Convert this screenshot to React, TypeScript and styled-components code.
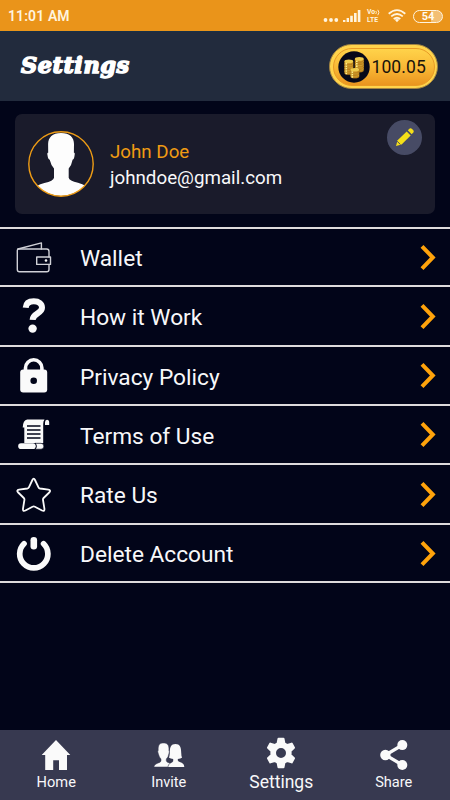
import React from "react";
import styled, { createGlobalStyle } from "styled-components";

const GlobalStyle = createGlobalStyle`
  * { box-sizing: border-box; }
  html, body { margin: 0; padding: 0; background: #020519; }
  body { font-family: Roboto, sans-serif; color: #f8f8fa; overflow: hidden; }
  svg { display: block; flex: none; }
`;

const Screen = styled.div`
  width: 450px;
  height: 800px;
  display: flex;
  flex-direction: column;
  background: #020519;
`;

const StatusBar = styled.div`
  height: 31px;
  flex: none;
  display: flex;
  align-items: center;
  justify-content: space-between;
  padding: 1px 7px 0 8px;
  background: #ea941a;
`;

const Clock = styled.span`
  font-size: 14px;
  font-weight: 600;
  line-height: 20px;
  letter-spacing: 0.1px;
  color: #fff4df;
`;

const StatusIcons = styled.div`
  display: flex;
  align-items: center;
`;

const NetworkLabel = styled.div`
  width: 17px;
  margin: 0 4px 0 6px;
  display: grid;
  grid-template-rows: 8px 8px;
  font-size: 7.5px;
  font-weight: 700;
  line-height: 8px;
  color: #fff4df;
  white-space: nowrap;
`;

const NetworkLine = styled.div`
  display: flex;
  align-items: center;
  height: 8px;
  font-size: 6.8px;
`;

const Battery = styled.span`
  width: 30px;
  height: 13px;
  margin-left: 7px;
  border: 1.5px solid #fff4df;
  border-radius: 7px;
  background: linear-gradient(90deg, #ea941a 25%, #ea941a 60%, #f3bf73 60%);
  color: #fffaf0;
  font-size: 11px;
  font-weight: 700;
  line-height: 11px;
  text-align: center;
`;

const Header = styled.header`
  height: 70px;
  flex: none;
  display: flex;
  align-items: center;
  justify-content: space-between;
  padding: 0 12px 0 21px;
  background: #222b3d;
  border-top: 1px solid #183047;
`;

const Title = styled.h1`
  margin: -3px 0 0;
  font-family: "DejaVu Serif", serif;
  font-size: 22.5px;
  font-weight: 700;
  font-style: italic;
  line-height: 30px;
  letter-spacing: 0.5px;
  color: #fff;
  -webkit-text-stroke: 1.5px #fff;
`;

const Balance = styled.div`
  width: 109px;
  height: 45px;
  padding: 2.5px;
  border-radius: 23px;
  background: #ffd34b;
  border: 1px solid #a18342;
`;

const BalanceInner = styled.div`
  height: 100%;
  display: flex;
  align-items: center;
  gap: 2px;
  padding-left: 4px;
  border: 1px solid #e99a25;
  border-radius: 20px;
  background: linear-gradient(#ffd34a, #f9b936 50%, #ea951f);
  color: #18130c;
  font-size: 17.5px;
  letter-spacing: 0.1px;
`;

const ProfileCard = styled.section`
  height: 100px;
  flex: none;
  display: flex;
  align-items: center;
  margin: 13px 15px 13px;
  padding: 0 13px 0 13px;
  border-radius: 7px;
  background: #1a1b2b;
`;

const Identity = styled.div`
  flex: 1;
  margin-left: 16px;
  padding-top: 2px;
  font-size: 18.75px;
  line-height: 26px;
`;

const Name = styled.div`
  color: #f09b13;
`;

const EditButton = styled.button`
  width: 35px;
  height: 35px;
  align-self: flex-start;
  margin-top: 6px;
  display: grid;
  place-items: center;
  padding: 0;
  border: 0;
  border-radius: 50%;
  background: #474b65;
`;

const Menu = styled.nav`
  flex: none;
  display: grid;
  grid-template-rows: 58px 60px 59px 59px 60px 58px;
  border-bottom: 2px solid #dedbdc;
`;

const MenuRow = styled.div`
  display: flex;
  align-items: center;
  padding: 1px 13px 0 14px;
  border-top: 2px solid #dedbdc;
`;

const MenuLabel = styled.span`
  flex: 1;
  margin-left: 26px;
  padding-top: 3px;
  font-size: 22.7px;
  line-height: 28px;
`;

const BottomNav = styled.nav`
  height: 70px;
  flex: none;
  margin-top: auto;
  display: grid;
  grid-template-columns: repeat(4, 1fr);
  background: #373950;
`;

const Tab = styled.div<{ $active?: boolean }>`
  display: flex;
  flex-direction: column;
  align-items: center;
  padding-top: ${(p) => (p.$active ? 6 : 9)}px;
  font-size: ${(p) => (p.$active ? 17.5 : 14.6)}px;
  line-height: 20px;
`;

const TabLabel = styled.span<{ $active?: boolean }>`
  margin-top: ${(p) => (p.$active ? 2 : 1)}px;
`;

const ink = "#fafafa";

const MenuIcon = ({ children }: { children: React.ReactNode }) => (
  <svg width="40" height="40" viewBox="0 0 40 40" fill="none" stroke={ink} strokeLinecap="round" strokeLinejoin="round">
    {children}
  </svg>
);

const WalletIcon = () => (
  <MenuIcon>
    <g stroke="#d0d1d7" strokeWidth="1.4">
      <path d="M35 19V13.5Q35 11 32.7 11H4.5Q3.3 11 3.3 12.5V31.5Q3.3 33.8 5.5 33.8H32.7Q35 33.8 35 31.5V26.5" />
      <path d="M4 11L27.4 4.9V11" />
      <path d="M22.7 19H36.5V26.4H22.7Z" />
    </g>
    <circle cx="32" cy="22.5" r="1.3" fill={ink} stroke="none" />
  </MenuIcon>
);

const QuestionIcon = () => (
  <MenuIcon>
    <path d="M11.7 10.8C12 6.2 15.2 4.3 19.8 4.3C25 4.3 28 6.9 28 10.8C28 16.7 18.9 16.1 18.6 22.9" strokeWidth="6" strokeLinecap="butt" />
    <circle cx="18.6" cy="31.6" r="4.2" fill={ink} stroke="none" />
  </MenuIcon>
);

const LockIcon = () => (
  <MenuIcon>
    <path d="M11.5 15V12A8.2 8.2 0 0 1 27.9 12V15" strokeWidth="3.6" />
    <rect x="6.2" y="13.6" width="27" height="22.8" rx="3" fill={ink} stroke="none" />
    <circle cx="19.7" cy="24.7" r="3.3" fill="#020519" stroke="none" />
  </MenuIcon>
);

const ScrollIcon = () => (
  <MenuIcon>
    <path d="M13.2 4.6H30.5Q29.2 6.2 29.2 9V28H10.3V12.4H8.7Q9 5.4 13.2 4.6Z" fill={ink} stroke="none" />
    <path d="M31 10V7.2Q31 4.7 33 4.7Q35.2 4.7 35.2 7.5V10Z" fill={ink} stroke="none" />
    <path d="M13 11H26.5M13 15H26.5M13 19H26.5M13 23H26.5" stroke="#020519" strokeWidth="1.4" strokeLinecap="butt" />
    <rect x="4.2" y="28.3" width="17.6" height="5.8" rx="2.8" fill={ink} stroke="none" />
    <path d="M21.5 28.3H27Q29.8 28.3 29.8 31.2Q29.8 34.2 27 34.2H21.5Q23.7 31.2 21.5 28.3Z" fill={ink} stroke="#020519" strokeWidth="0.6" />
  </MenuIcon>
);

const StarIcon = () => (
  <MenuIcon>
    <path
      d="M18.4 5Q19.7 2.3 21 5L24.5 12.3Q25 13.3 26.1 13.5L34.3 14.7Q37.4 15.3 35.2 17.5L29.6 23Q28.8 23.8 29 25L30.4 33.6Q30.8 36.8 28 35.5L20.9 31.7Q19.7 31.1 18.5 31.7L11.4 35.5Q8.6 36.8 9 33.6L10.4 25Q10.6 23.8 9.8 23L4.2 17.5Q2 15.3 5.1 14.7L13.3 13.5Q14.4 13.3 14.9 12.3Z"
      strokeWidth="1.8"
    />
  </MenuIcon>
);

const PowerIcon = () => (
  <MenuIcon>
    <path d="M10 9.7A14.1 14.1 0 1 0 29.6 9.7" strokeWidth="5.7" />
    <path d="M19.8 6.3V12.3" strokeWidth="6.6" />
  </MenuIcon>
);

const ChevronIcon = () => (
  <svg width="17" height="28" viewBox="0 0 17 28" fill="none" stroke="#ffa30b" strokeWidth="4">
    <path d="M2 2.3L12.8 13.5L2 24.7" />
  </svg>
);

const CoinStack = ({ x, y, coins }: { x: number; y: number; coins: number }) => (
  <g>
    {Array.from({ length: coins }, (_, i) => (
      <g key={i}>
        <path
          d={`M${x - 4.4} ${y - i * 2.4}v2a4.4 1.8 0 0 0 8.8 0v-2z`}
          fill="#c78b20"
          stroke="#81540c"
          strokeWidth="0.3"
        />
        <path d={`M${x - 2.5} ${y + 1.6 - i * 2.4}v1.6`} stroke="#fff08d" strokeWidth="1.6" />
        <ellipse cx={x} cy={y - i * 2.4} rx="4.4" ry="1.8" fill="#efcc4c" />
      </g>
    ))}
  </g>
);

const CoinsIcon = () => (
  <svg width="32" height="32" viewBox="0 0 32 32">
    <circle cx="16" cy="16" r="15.7" fill="#070919" />
    <CoinStack x={21.3} y={17.5} coins={5} />
    <CoinStack x={10.8} y={20} coins={5} />
    <CoinStack x={16.8} y={23.5} coins={3} />
  </svg>
);

const Avatar = () => (
  <svg width="66" height="66" viewBox="0 0 66 66">
    <clipPath id="portrait">
      <circle cx="33" cy="33" r="32" />
    </clipPath>
    <path
      clipPath="url(#portrait)"
      fill="#fdfdfd"
      d="M33 2C24.2 2 20.3 6.6 20.1 13L20.2 21.8Q18.9 21.3 19.5 24.2Q20 28.3 21.7 28.8Q23 34.3 26 37.6V46.7Q25.5 50 16.4 52.1Q12 53 9 55V66H58V55Q54.5 53 50 51.8Q41.2 49.6 40.7 46.7V37.6Q43.7 34 44.6 28.8Q46.2 28.3 46.6 24.2Q47.1 21.3 45.9 21.8L46 13C46 6.6 41.9 2 33 2Z"
    />
    <circle cx="33" cy="33" r="32.2" fill="none" stroke="#ee9c15" strokeWidth="1.4" />
  </svg>
);

const PencilIcon = () => (
  <svg width="22" height="22" viewBox="0 0 22 22" fill="#f5df18">
    <path d="M3.6 13.2L12.7 4.4L16.7 8.4L7.6 17.4L2 19Z" />
    <path d="M13.8 3.3L15.7 1.5Q16.8 .8 17.8 1.8L19.3 3.3Q20.3 4.4 19.3 5.5L17.7 7.2Z" />
    <path d="M3.2 14.3L6.5 17.6" stroke="#474b65" strokeWidth="1" />
  </svg>
);

const SignalIcon = () => (
  <svg width="38" height="16" viewBox="0 0 38 16" fill="#fff4df">
    <circle cx="2.5" cy="12" r="1.9" />
    <circle cx="8" cy="12" r="1.9" />
    <circle cx="13.3" cy="12" r="1.9" />
    <path d="M20 12h2.4v2H20zM23.6 10H26v4h-2.4zM27.2 7.7h2.6V14h-2.6zM31 5h2.6v9H31zM34.8 2h2.6v12h-2.6z" />
  </svg>
);

const VoiceWavesIcon = () => (
  <svg width="5" height="7" viewBox="0 0 5 7" fill="none" stroke="#fff4df" strokeWidth="0.9">
    <path d="M.8 2Q2 3.5 .8 5M2.8.8Q5 3.5 2.8 6.2" />
  </svg>
);

const WifiIcon = () => (
  <svg width="18" height="14" viewBox="0 0 18 14" fill="none" stroke="#fff4df" strokeWidth="1.8">
    <path d="M.7 4.7Q9-2.4 17.3 4.7M3.2 7.4Q9 2.6 14.8 7.4M5.7 10Q9 7.4 12.3 10" />
    <path d="M6.8 10.8Q9 9.3 11.2 10.8L9 13.3Z" fill="#fff4df" stroke="none" />
  </svg>
);

const HomeIcon = () => (
  <svg width="30" height="32" viewBox="0 0 30 32" fill={ink}>
    <path d="M15 1L29.3 16H26V31H18V21.3H12.2V31H4.2V16H.7Z" />
  </svg>
);

const InviteIcon = () => (
  <svg width="32" height="32" viewBox="0 0 32 32" fill={ink}>
    <path d="M22.5 5C18 5 16.8 8.4 16.8 13.5Q16.7 17 15.9 18.6Q17.5 20 20.2 20V22.2Q19.5 23.6 16.9 24.6Q15 25.5 14.8 28H31.3Q31 24.6 28 23.6Q24.9 22.5 24.8 21.5V20Q27.7 20 29.1 18.6Q28.2 17 28.2 13.5C28.2 8.3 26.8 5 22.5 5Z" />
    <path d="M10.5 4C6.3 4 5 6.2 5.2 11.6Q4.3 12 5.4 15Q6.3 18.7 8 20V22.2Q7.5 23.4 4 24.4Q1 25.6 .8 28H15Q14.8 25.5 17.3 24.2Q13.5 23.5 13.3 21.8V20Q15.3 18.3 15.8 15Q16.8 12.4 15.9 11.5C16.3 6 14.5 4 10.5 4Z" stroke="#373950" strokeWidth="0.5" />
  </svg>
);

const GearIcon = () => (
  <svg width="32" height="34" viewBox="0 0 32 34" fill={ink} stroke={ink} strokeLinejoin="round">
    <path
      fillRule="evenodd"
      strokeWidth="2"
      d="M13.5 2.8H18.5L19.4 7.3L22.3 9L26.7 7.6L29 11.7L25.6 14.9V19.1L29 22.3L26.7 26.4L22.3 25L19.4 26.7L18.5 31.2H13.5L12.6 26.7L9.7 25L5.3 26.4L3 22.3L6.4 19.1V14.9L3 11.7L5.3 7.6L9.7 9L12.6 7.3ZM22 17A6 6 0 1 0 10 17A6 6 0 1 0 22 17Z"
    />
  </svg>
);

const ShareIcon = () => (
  <svg width="30" height="32" viewBox="0 0 30 32" fill={ink}>
    <path d="M23.4 6L6.4 16L23.4 26" fill="none" stroke={ink} strokeWidth="3.2" />
    <circle cx="23.3" cy="6.1" r="5" />
    <circle cx="6.4" cy="16" r="5.2" />
    <circle cx="23.3" cy="26" r="5" />
  </svg>
);

const menuItems = [
  { label: "Wallet", Icon: WalletIcon },
  { label: "How it Work", Icon: QuestionIcon },
  { label: "Privacy Policy", Icon: LockIcon },
  { label: "Terms of Use", Icon: ScrollIcon },
  { label: "Rate Us", Icon: StarIcon },
  { label: "Delete Account", Icon: PowerIcon },
];

const tabs = [
  { label: "Home", Icon: HomeIcon },
  { label: "Invite", Icon: InviteIcon },
  { label: "Settings", Icon: GearIcon, active: true },
  { label: "Share", Icon: ShareIcon },
];

export default function App() {
  return (
    <>
      <GlobalStyle />
      <Screen>
        <StatusBar>
          <Clock>11:01 AM</Clock>
          <StatusIcons>
            <SignalIcon />
            <NetworkLabel>
              <NetworkLine>
                Vo
                <VoiceWavesIcon />
              </NetworkLine>
              <NetworkLine>LTE</NetworkLine>
            </NetworkLabel>
            <WifiIcon />
            <Battery>54</Battery>
          </StatusIcons>
        </StatusBar>
        <Header>
          <Title>Settings</Title>
          <Balance>
            <BalanceInner>
              <CoinsIcon />
              100.05
            </BalanceInner>
          </Balance>
        </Header>
        <ProfileCard>
          <Avatar />
          <Identity>
            <Name>John Doe</Name>
            <div>johndoe@gmail.com</div>
          </Identity>
          <EditButton aria-label="Edit profile">
            <PencilIcon />
          </EditButton>
        </ProfileCard>
        <Menu>
          {menuItems.map(({ label, Icon }) => (
            <MenuRow key={label}>
              <Icon />
              <MenuLabel>{label}</MenuLabel>
              <ChevronIcon />
            </MenuRow>
          ))}
        </Menu>
        <BottomNav>
          {tabs.map(({ label, Icon, active }) => (
            <Tab key={label} $active={active}>
              <Icon />
              <TabLabel $active={active}>{label}</TabLabel>
            </Tab>
          ))}
        </BottomNav>
      </Screen>
    </>
  );
}
